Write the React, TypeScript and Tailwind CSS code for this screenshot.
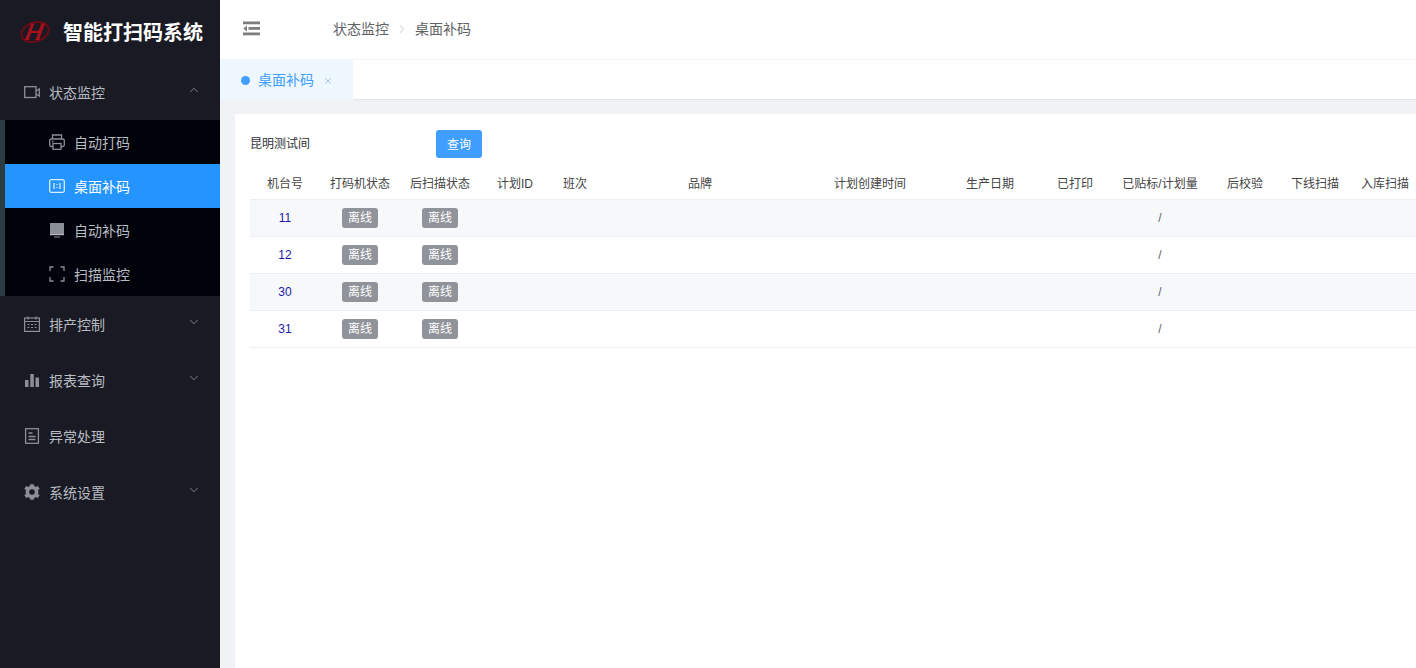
import React from 'react';
import { ChevronDown, ChevronUp, ChevronRight, X } from 'lucide-react';

const font = "font-['Liberation_Sans','Noto_Sans_CJK_SC',sans-serif]";

const Logo = () => (
  <svg width="32" height="32" viewBox="0 0 32 32" className="shrink-0">
    <ellipse cx="16" cy="16" rx="14" ry="9.5" fill="none" stroke="#6b0b14" strokeWidth="2" transform="rotate(-18 16 16)" />
    <path d="M11 7.500h5l-1 1.200-2.400 6h7l2.400-6-1-1.200h6l-1.200 1.200-5.400 14 1.200 1.400h-5.600l1-1.400 2-5.600h-7l-2 5.600 1 1.400h-6l1.400-1.400 5.400-14z" fill="#a80f1c" />
  </svg>
);

const VideoIcon = () => (
  <svg width="16" height="16" viewBox="0 0 16 16" fill="none" stroke="#8b8f96" strokeWidth="1.300">
    <rect x="0.700" y="2.700" width="11.300" height="10.800" />
    <path d="M12 7l3.300-2v7l-3.300-2" />
  </svg>
);

const PrinterIcon = () => (
  <svg width="16" height="16" viewBox="0 0 16 16" fill="none" stroke="#8b8f96" strokeWidth="1.300">
    <path d="M3.500 5V1h9v4" />
    <rect x="0.700" y="5" width="14.600" height="7.500" rx="1.500" />
    <rect x="4" y="9.500" width="8" height="5.800" fill="#01020a" />
    <path d="M3 7.500h1.500" />
  </svg>
);

const BoardIcon = () => (
  <svg width="16" height="14" viewBox="0 0 16 14" fill="none" stroke="#d9efff" strokeWidth="1.300">
    <rect x="0.700" y="0.700" width="14.600" height="12.600" rx="1.500" />
    <path d="M5 4v6M8 5v1M8 8v1M11 4v6" />
  </svg>
);

const MonitorIcon = () => (
  <svg width="16" height="16" viewBox="0 0 16 16" fill="#8b8f96">
    <rect x="1" y="1" width="14" height="11" />
    <rect x="1" y="12" width="14" height="1.200" fill="#b5b8bd" />
    <rect x="5" y="14.500" width="6" height="1" />
  </svg>
);

const ScanIcon = () => (
  <svg width="16" height="16" viewBox="0 0 16 16" fill="none" stroke="#8b8f96" strokeWidth="1.300">
    <path d="M1 5V1h3.500M11.500 1H15v4M1 11v4h3.500M11.500 15H15v-4" />
  </svg>
);

const CalendarIcon = () => (
  <svg width="16" height="16" viewBox="0 0 16 16" fill="none" stroke="#8b8f96" strokeWidth="1.200">
    <rect x="0.600" y="2" width="14.800" height="13.400" />
    <path d="M0.600 5.500h14.800M4 0.500v3M12 0.500v3" />
    <path d="M3.500 8.500h2M7 8.500h2M10.500 8.500h2M3.500 11.500h2M7 11.500h2M10.500 11.500h2" />
  </svg>
);

const BarsIcon = () => (
  <svg width="16" height="16" viewBox="0 0 16 16" fill="#8b8f96">
    <rect x="1" y="8" width="3.500" height="7" />
    <rect x="6.300" y="2" width="3.500" height="13" />
    <rect x="11.500" y="5.500" width="3.500" height="9.500" />
  </svg>
);

const DocIcon = () => (
  <svg width="16" height="16" viewBox="0 0 16 16" fill="none" stroke="#8b8f96" strokeWidth="1.300">
    <rect x="1.600" y="0.700" width="12.800" height="14.600" />
    <path d="M4.500 5h4M4.500 8.500h7M4.500 11.500h7" />
  </svg>
);

const GearIcon = () => (
  <svg width="16" height="16" viewBox="0 0 16 16">
    <circle cx="8" cy="8" r="4.600" fill="none" stroke="#8b8f96" strokeWidth="3.600" />
    <path d="M6.200 0.300h3.600l.5 3h-4.600zM6.200 15.700h3.600l.5-3h-4.600zM0.300 5l1.800-3 2.800 1.200-2.200 3zM15.700 5l-1.800-3-2.800 1.200 2.200 3zM0.300 11l1.800 3 2.800-1.200-2.200-3zM15.700 11l-1.800 3-2.800-1.200 2.200-3z" fill="#8b8f96" />
  </svg>
);

const FoldIcon = () => (
  <svg width="17" height="15" viewBox="0 0 17 15" fill="#7d7d7d">
    <rect x="0" y="0.500" width="17" height="2.800" />
    <rect x="5.500" y="6" width="11.500" height="2.800" />
    <rect x="0" y="11.500" width="17" height="2.800" />
    <path d="M4 4.500v6L0.300 7.500z" />
  </svg>
);

const MenuItem = ({ icon, label, arrow }: { icon: React.ReactNode; label: string; arrow?: 'up' | 'down' }) => (
  <div className="h-14 flex items-center pl-6 pr-[19px]">
    <span className="w-4 h-4 flex items-center justify-center mr-[9px]">{icon}</span>
    <span className="pt-[2px] text-sm text-[#b8bcc2]">{label}</span>
    {arrow === 'up' && <ChevronUp size={14} strokeWidth={1.500} className="ml-auto mb-1 text-[#8b8f96]" />}
    {arrow === 'down' && <ChevronDown size={14} strokeWidth={1.500} className="ml-auto mb-1 text-[#8b8f96]" />}
  </div>
);

const SubItem = ({ icon, label, active }: { icon: React.ReactNode; label: string; active?: boolean }) => (
  <div className={`h-11 flex items-center pl-11 ${active ? 'bg-[#2494ff]' : ''}`}>
    <span className="w-4 h-4 flex items-center justify-center mr-[9px]">{icon}</span>
    <span className={`pt-[2px] text-sm ${active ? 'text-white' : 'text-[#b8bcc2]'}`}>{label}</span>
  </div>
);

const columns = [
  { title: '机台号', width: 'w-[70px]' },
  { title: '打码机状态', width: 'w-[80px]' },
  { title: '后扫描状态', width: 'w-[80px]' },
  { title: '计划ID', width: 'w-[70px]' },
  { title: '班次', width: 'w-[50px]' },
  { title: '品牌', width: 'w-[200px]' },
  { title: '计划创建时间', width: 'w-[140px]' },
  { title: '生产日期', width: 'w-[100px]' },
  { title: '已打印', width: 'w-[70px]' },
  { title: '已贴标/计划量', width: 'w-[100px]' },
  { title: '后校验', width: 'w-[70px]' },
  { title: '下线扫描', width: 'w-[70px]' },
  { title: '入库扫描', width: 'w-[70px]' },
];

const machines = ['11', '12', '30', '31'];

const Offline = () => (
  <span className="block mx-auto w-9 h-5 leading-5 rounded-[3px] bg-[#909399] text-white text-xs">离线</span>
);

export default function App() {
  return (
    <div className={`h-screen w-full flex overflow-hidden bg-white ${font}`}>
      <aside className="w-[220px] shrink-0 bg-[#191a23] h-full">
        <div className="h-16 flex items-center pl-[19px]">
          <Logo />
          <span className="pt-[2px] ml-3 text-xl font-bold text-white whitespace-nowrap">智能打扫码系统</span>
        </div>
        <MenuItem icon={<VideoIcon />} label="状态监控" arrow="up" />
        <div className="bg-[#01020a] border-l-[5px] border-[#2c3a41]">
          <SubItem icon={<PrinterIcon />} label="自动打码" />
          <SubItem icon={<BoardIcon />} label="桌面补码" active />
          <SubItem icon={<MonitorIcon />} label="自动补码" />
          <SubItem icon={<ScanIcon />} label="扫描监控" />
        </div>
        <MenuItem icon={<CalendarIcon />} label="排产控制" arrow="down" />
        <MenuItem icon={<BarsIcon />} label="报表查询" arrow="down" />
        <MenuItem icon={<DocIcon />} label="异常处理" />
        <MenuItem icon={<GearIcon />} label="系统设置" arrow="down" />
      </aside>

      <main className="flex-1 min-w-0 flex flex-col bg-[#f0f2f5]">
        <header className="h-[60px] shrink-0 bg-white border-b border-[#f3f4f6] flex items-center pl-[23px] pb-[2px]">
          <FoldIcon />
          <div className="ml-[73px] flex items-center text-sm text-[#606266]">
            <span>状态监控</span>
            <ChevronRight size={14} strokeWidth={1.500} className="mx-[6px] text-[#c0c4cc]" />
            <span>桌面补码</span>
          </div>
        </header>

        <div className="h-10 shrink-0 bg-white border-b border-[#dfe4ed] flex">
          <div className="w-[133px] h-10 bg-[#eef6fe] flex items-center pl-[21px] text-sm text-[#409eff]">
            <span className="w-[9px] h-[9px] rounded-full bg-[#409eff] mr-2" />
            <span>桌面补码</span>
            <X size={10} strokeWidth={1.500} className="ml-[9px] mt-[2px] text-[#7aa7d8]" />
          </div>
        </div>

        <div className="flex-1 min-h-0 pl-[15px] pt-[14px]">
          <section className="h-full bg-white pl-[15px] pt-4">
            <div className="h-[28px] flex items-center text-xs text-[#303133]">
              <span className="w-[186px]">昆明测试间</span>
              <button className="w-[46px] h-[28px] pt-[1px] rounded-[3px] bg-[#409eff] text-white text-xs">查询</button>
            </div>
            <table className="mt-[10px] w-[1170px] table-fixed border-collapse text-xs text-center">
              <thead>
                <tr className="h-[31px] border-b border-[#ebeef5] text-[#444]">
                  {columns.map((col) => (
                    <th key={col.title} className={`${col.width} pt-[1px] font-normal whitespace-nowrap`}>{col.title}</th>
                  ))}
                </tr>
              </thead>
              <tbody>
                {machines.map((id, i) => (
                  <tr key={id} className={`h-[37px] border-b border-[#ebeef5] ${i % 2 === 0 ? 'bg-[#f7f8fa]' : ''}`}>
                    <td className="text-[#1a1aa6]">{id}</td>
                    <td className="pt-[1px]"><Offline /></td>
                    <td className="pt-[1px]"><Offline /></td>
                    <td />
                    <td />
                    <td />
                    <td />
                    <td />
                    <td />
                    <td className="text-[#606266]">/</td>
                    <td />
                    <td />
                    <td />
                  </tr>
                ))}
              </tbody>
            </table>
          </section>
        </div>
      </main>
    </div>
  );
}
